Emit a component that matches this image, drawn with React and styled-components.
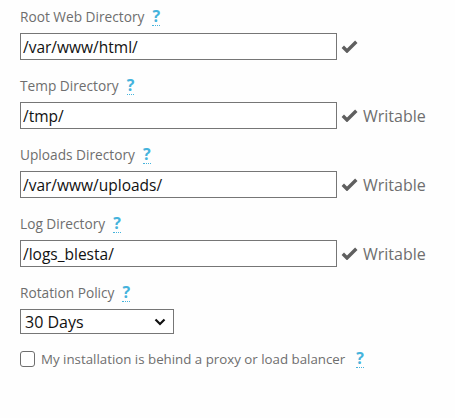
import React, { useState } from 'react'
import styled, { createGlobalStyle } from 'styled-components'

const GlobalStyle = createGlobalStyle`
  html, body {
    margin: 0;
    padding: 0;
    background: #fefefe;
  }
  body {
    font-family: "Open Sans", "Liberation Sans", sans-serif;
  }
`

const Form = styled.div`
  padding: 8px 20px 0 20px;
  display: flex;
  flex-direction: column;
`

const Field = styled.div`
  display: flex;
  flex-direction: column;
  margin-bottom: ${props => props.$gap || 17}px;
`

const Label = styled.label`
  display: flex;
  align-items: center;
  gap: 8px;
  font-size: 13.7px;
  line-height: 18px;
  color: #6e6e6e;
  margin-bottom: 7px;
`

const Help = styled.span`
  color: #45b3dc;
  font-weight: 700;
  font-size: 16px;
  line-height: 17px;
  border-bottom: 1px dotted #45b3dc;
  cursor: help;
`

const Row = styled.div`
  display: flex;
  align-items: center;
`

const TextInput = styled.input`
  box-sizing: border-box;
  width: 317px;
  height: 27px;
  padding: 0 2px;
  border: 1px solid #767676;
  border-radius: 0;
  font-family: "Open Sans", "Liberation Sans", sans-serif;
  font-size: 15.5px;
  color: #111;
  background: #fff;
  outline: none;
`

const Status = styled.span`
  display: flex;
  align-items: center;
  margin-left: 4px;
  font-size: 16px;
  color: #6e6e6e;
  gap: 5px;
`

const Select = styled.select`
  box-sizing: border-box;
  width: 154px;
  height: 25px;
  padding: 0 8px 0 4px;
  border: 1px solid #767676;
  border-radius: 0;
  font-family: "Open Sans", "Liberation Sans", sans-serif;
  font-size: 16px;
  color: #111;
  background: #fff;
  appearance: none;
  background-image: url("data:image/svg+xml;utf8,<svg xmlns='http://www.w3.org/2000/svg' width='12' height='8' viewBox='0 0 12 8'><path d='M1.5 1.5 L6 6 L10.5 1.5' fill='none' stroke='%23111' stroke-width='2.2'/></svg>");
  background-repeat: no-repeat;
  background-position: right 7px center;
`

const CheckRow = styled.label`
  display: flex;
  align-items: center;
  font-size: 13.3px;
  color: #6e6e6e;
`

const CheckBox = styled.input`
  appearance: none;
  box-sizing: border-box;
  margin: 0 6px 0 0;
  width: 15px;
  height: 16px;
  border: 1px solid #6e6e6e;
  border-radius: 3px;
  background: #fff;
  &:checked {
    background: #45b3dc;
  }
`

const CheckText = styled.span`
  margin-right: 11px;
`

const Check = () => (
  <svg width="17" height="13" viewBox="0 0 17 13">
    <path d="M1.8 6.8 L6 11 L15.3 1.7" fill="none" stroke="#5f5f5f" strokeWidth="3.4" />
  </svg>
)

const dirs = [
  { label: 'Root Web Directory', value: '/var/www/html/', writable: false },
  { label: 'Temp Directory', value: '/tmp/', writable: true },
  { label: 'Uploads Directory', value: '/var/www/uploads/', writable: true },
  { label: 'Log Directory', value: '/logs_blesta/', writable: true },
]

const App = () => {
  const [values, setValues] = useState(dirs.map(d => d.value))

  return (
    <>
      <GlobalStyle />
      <Form>
        {dirs.map((dir, i) => (
          <Field key={dir.label}>
            <Label>
              {dir.label} <Help>?</Help>
            </Label>
            <Row>
              <TextInput
                value={values[i]}
                onChange={e => setValues(values.map((v, j) => (j === i ? e.target.value : v)))}
              />
              <Status>
                <Check />
                {dir.writable && 'Writable'}
              </Status>
            </Row>
          </Field>
        ))}
        <Field $gap={16}>
          <Label>
            Rotation Policy <Help>?</Help>
          </Label>
          <Row>
            <Select defaultValue="30">
              <option value="1">1 Day</option>
              <option value="7">7 Days</option>
              <option value="30">30 Days</option>
              <option value="90">90 Days</option>
            </Select>
          </Row>
        </Field>
        <CheckRow>
          <CheckBox type="checkbox" />
          <CheckText>My installation is behind a proxy or load balancer</CheckText>
          <Help>?</Help>
        </CheckRow>
      </Form>
    </>
  )
}

export default App
